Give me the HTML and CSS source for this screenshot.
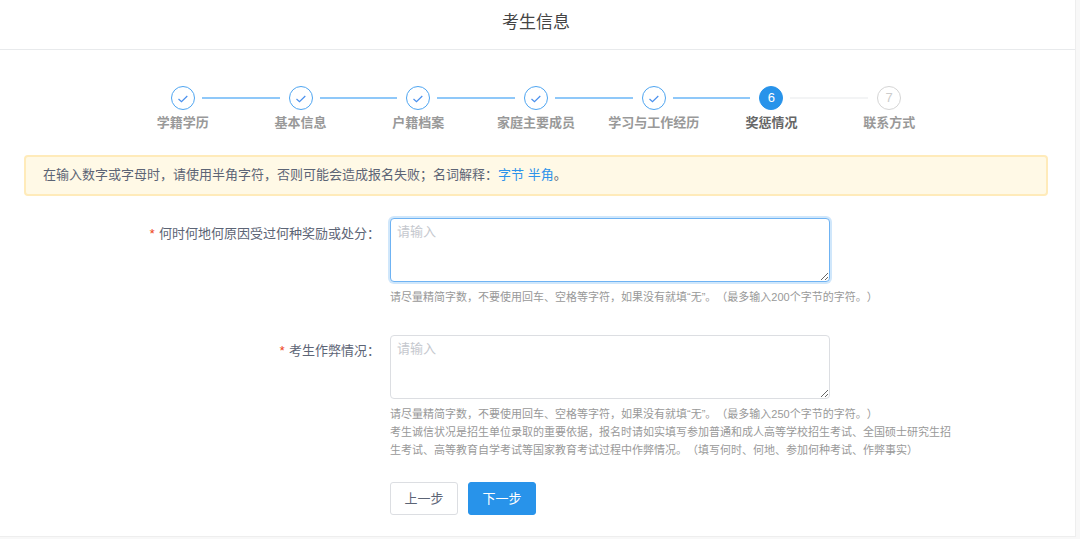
FILE: index.html
```html
<!DOCTYPE html>
<html lang="zh-CN">
<head>
<meta charset="utf-8">
<meta name="viewport" content="width=device-width, initial-scale=1">
<title>考生信息</title>
<link rel="stylesheet" href="styles.css">
</head>
<body>
<main class="card">
  <header class="card-header"><h1 class="card-title">考生信息</h1></header>
  <div class="card-body">
    <ol class="steps">
      <li class="step done"><span class="marker"><svg viewBox="0 0 24 24"><path d="M7.5 13 L10.5 15.7 L16.3 10"/></svg></span><span class="step-title">学籍学历</span></li>
      <li class="step done"><span class="marker"><svg viewBox="0 0 24 24"><path d="M7.5 13 L10.5 15.7 L16.3 10"/></svg></span><span class="step-title">基本信息</span></li>
      <li class="step done"><span class="marker"><svg viewBox="0 0 24 24"><path d="M7.5 13 L10.5 15.7 L16.3 10"/></svg></span><span class="step-title">户籍档案</span></li>
      <li class="step done"><span class="marker"><svg viewBox="0 0 24 24"><path d="M7.5 13 L10.5 15.7 L16.3 10"/></svg></span><span class="step-title">家庭主要成员</span></li>
      <li class="step done"><span class="marker"><svg viewBox="0 0 24 24"><path d="M7.5 13 L10.5 15.7 L16.3 10"/></svg></span><span class="step-title">学习与工作经历</span></li>
      <li class="step current" aria-current="step"><span class="marker">6</span><span class="step-title">奖惩情况</span></li>
      <li class="step waiting"><span class="marker">7</span><span class="step-title">联系方式</span></li>
    </ol>

    <p class="notice">在输入数字或字母时，请使用半角字符，否则可能会造成报名失败；名词解释：<a href="#byte">字节</a> <a href="#half">半角</a>。</p>

    <form class="form">
      <div class="field">
        <label class="label" for="awards"><span class="required">*</span>何时何地何原因受过何种奖励或处分：</label>
        <div class="control">
          <textarea class="textarea" id="awards" placeholder="请输入" autofocus></textarea>
          <p class="hint">请尽量精简字数，不要使用回车、空格等字符，如果没有就填“无”。（最多输入200个字节的字符。）</p>
        </div>
      </div>
      <div class="field">
        <label class="label" for="cheating"><span class="required">*</span>考生作弊情况：</label>
        <div class="control">
          <textarea class="textarea" id="cheating" placeholder="请输入"></textarea>
          <p class="hint">请尽量精简字数，不要使用回车、空格等字符，如果没有就填“无”。（最多输入250个字节的字符。）<br>考生诚信状况是招生单位录取的重要依据，报名时请如实填写参加普通和成人高等学校招生考试、全国硕士研究生招生考试、高等教育自学考试等国家教育考试过程中作弊情况。（填写何时、何地、参加何种考试、作弊事实）</p>
        </div>
      </div>
      <div class="field">
        <div class="actions">
          <button class="button" type="button">上一步</button>
          <button class="button primary" type="button">下一步</button>
        </div>
      </div>
    </form>
  </div>
</main>
</body>
</html>
```
FILE: styles.css
```css
* {
  box-sizing: border-box;
}

body {
  margin: 0;
  padding-right: 4px;
  background: #f8f8f8;
  color: #5c6475;
  font: 13px/20px "Liberation Sans", "Noto Sans CJK SC", sans-serif;
  text-spacing-trim: space-all;
}

.card {
  background: #fff;
  border: solid #eee;
  border-width: 0 1px 1px 0;
}

.card-header {
  padding: 11px 27px 14px 24px;
  border-bottom: 1px solid #e8eaec;
}

.card-title {
  margin: 0;
  color: #444;
  font-size: 17px;
  font-weight: 400;
  line-height: 24px;
  text-align: center;
}

.card-body {
  padding: 36px 27px 21px 24px;
}

.steps {
  display: flex;
  max-width: 824px;
  margin: 0 auto 22px;
  padding: 0;
  list-style: none;
}

.step {
  --before: #8fc8f9;
  --after: #8fc8f9;
  display: grid;
  flex: 1;
  grid-template-columns: 1fr 24px 1fr;
  align-items: center;
  row-gap: 3px;
}

.step::before,
.step::after {
  content: "";
  grid-row: 1;
  height: 2px;
  background: var(--before);
}

.step::before {
  grid-column: 1;
  margin-right: 9px;
}

.step::after {
  grid-column: 3;
  margin-left: 7px;
  background: var(--after);
}

.step:first-child {
  --before: transparent;
}

.current {
  --after: #f3f4f5;
}

.waiting {
  --before: #f3f4f5;
  --after: transparent;
}

.marker {
  display: flex;
  grid-row: 1;
  grid-column: 2;
  align-items: center;
  justify-content: center;
  height: 24px;
  border: 1px solid #4ea5f1;
  border-radius: 50%;
}

.marker svg {
  flex: none;
  width: 24px;
  height: 24px;
  fill: none;
  stroke: #4a90ee;
  stroke-width: 1.2;
}

.current .marker {
  background: #2893ea;
  border-color: #2893ea;
  color: #fff;
}

.waiting .marker {
  border-color: #d5d5d5;
  color: #ccc;
}

.step-title {
  grid-row: 2;
  grid-column: 1 / -1;
  color: #999;
  font-weight: 700;
  text-align: center;
}

.current .step-title {
  color: #666;
}

.notice {
  margin: 0 0 22px;
  padding: 8px 17px 9px;
  background: #fff9e6;
  border: 2px solid #ffebba;
  border-radius: 4px;
}

.notice a {
  color: #2d93ea;
  text-decoration: none;
}

.field {
  display: grid;
  grid-template-columns: 356fr 658fr;
  column-gap: 10px;
}

.label {
  padding-top: 6px;
  text-align: right;
}

.required {
  margin-right: 3px;
  color: #ed4014;
  font-family: "Liberation Mono", monospace;
}

.control {
  max-width: 566px;
  padding-bottom: 29px;
}

.textarea {
  display: block;
  width: 440px;
  max-width: 100%;
  height: 64px;
  padding: 3px 6px;
  background: #fff;
  border: 1px solid #dcdee2;
  border-radius: 4px;
  color: #515a6e;
  font: inherit;
  resize: both;
}

.textarea::placeholder {
  color: #c5c8ce;
}

.textarea:focus {
  border-color: #6fb3f3;
  box-shadow: 0 0 0 2px #d0e7fb;
  outline: 0;
}

.hint {
  margin: 6px 0 0;
  color: #999;
  font-size: 11px;
  line-height: 18px;
}

.actions {
  display: flex;
  grid-column: 2;
  gap: 10px;
  margin-top: -6px;
}

.button {
  min-width: 68px;
  height: 33px;
  padding: 0 13px;
  background: #fff;
  border: 1px solid #dcdee2;
  border-radius: 3px;
  color: #5c6475;
  font: inherit;
}

.primary {
  background: #2893ea;
  border-color: #2893ea;
  color: #fff;
}
```
